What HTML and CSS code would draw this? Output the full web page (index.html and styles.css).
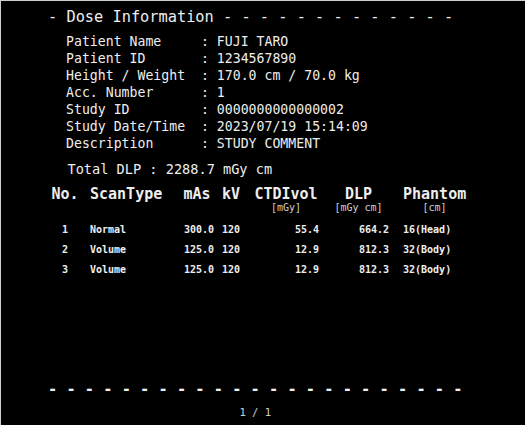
FILE: index.html
```html
<!DOCTYPE html>
<html>
<head>
<meta charset="utf-8">
<link rel="stylesheet" href="styles.css">
</head>
<body>
<div class="page">
  <div class="title">- Dose Information - - - - - - - - - - - - -</div>
  <div class="info">Patient Name     : FUJI TARO
Patient ID       : 1234567890
Height / Weight  : 170.0 cm / 70.0 kg
Acc. Number      : 1
Study ID         : 0000000000000002
Study Date/Time  : 2023/07/19 15:14:09
Description      : STUDY COMMENT</div>
  <div class="total">Total DLP : 2288.7 mGy cm</div>
  <div class="table">
    <div class="h c1">No.</div>
    <div class="h c2">ScanType</div>
    <div class="h c3">mAs</div>
    <div class="h c4">kV</div>
    <div class="h c5"><span class="hs"><span class="ht">CTDIvol</span><span class="unit">[mGy]</span></span></div>
    <div class="h c6"><span class="hs"><span class="ht">DLP</span><span class="unit">[mGy cm]</span></span></div>
    <div class="h c7"><span class="hs"><span class="ht">Phantom</span><span class="unit">[cm]</span></span></div>

    <div class="d c1 first">1</div><div class="d c2 first">Normal</div><div class="d c3 first">300.0</div><div class="d c4 first">120</div><div class="d c5 first">55.4</div><div class="d c6 first">664.2</div><div class="d c7 first">16(Head)</div>
    <div class="d c1">2</div><div class="d c2">Volume</div><div class="d c3">125.0</div><div class="d c4">120</div><div class="d c5">12.9</div><div class="d c6">812.3</div><div class="d c7">32(Body)</div>
    <div class="d c1">3</div><div class="d c2">Volume</div><div class="d c3">125.0</div><div class="d c4">120</div><div class="d c5">12.9</div><div class="d c6">812.3</div><div class="d c7">32(Body)</div>
  </div>
  <div class="footer">
    <div class="dashes">- - - - - - - - - - - - - - - - - - - - - - -</div>
    <div class="pageno">1 / 1</div>
  </div>
</div>
</body>
</html>
```

FILE: styles.css
```css
html, body {
  margin: 0;
  padding: 0;
  background: #000;
}
.page {
  box-sizing: border-box;
  width: 525px;
  height: 425px;
  background: #000;
  border-top: 1px solid #cfcfcf;
  border-left: 1px solid #cfcfcf;
  display: flex;
  flex-direction: column;
  color: #eeeeee;
  font-family: "DejaVu Sans Mono", "Liberation Mono", monospace;
  padding-top: 6px;
}
.title {
  font-size: 15.3px;
  line-height: 20px;
  white-space: pre;
  padding-left: 47px;
}
.info {
  white-space: pre;
  font-size: 13.2px;
  line-height: 17px;
  margin-top: 5.5px;
  padding-left: 65px;
}
.total {
  font-size: 13.6px;
  line-height: 18px;
  margin-top: 8.5px;
  padding-left: 66.5px;
  white-space: pre;
}
.table {
  display: grid;
  grid-template-columns: 50px 86px 42px 32px 72px 73px 85px;
  grid-auto-rows: auto;
  margin-top: 8px;
  padding-left: 39px;
}
.h {
  font-weight: bold;
  font-size: 15px;
  line-height: 16px;
  white-space: pre;
}
.hs {
  display: inline-flex;
  flex-direction: column;
  align-items: center;
}
.ht {
  display: block;
  height: 16px;
  overflow: visible;
}
.unit {
  display: block;
  font-weight: normal;
  font-size: 10px;
  line-height: 10px;
  margin-top: 1px;
  color: #d0d0d0;
}
.d {
  font-size: 10px;
  line-height: 20px;
  font-weight: bold;
  white-space: pre;
}
.d.first { margin-top: 7px; }
.c1 { text-align: center; }
.c2 { text-align: left; }
.h.c3 { text-align: center; }
.d.c3 { text-align: right; padding-right: 4px; }
.c4 { text-align: left; padding-left: 4px; }
.h.c5 { text-align: center; }
.d.c5 { text-align: right; padding-right: 3px; }
.h.c6 { text-align: center; }
.d.c6 { text-align: right; padding-right: 6px; }
.c7 { text-align: left; padding-left: 8px; }
.footer {
  margin-top: auto;
  padding-left: 47px;
  padding-bottom: 6px;
  align-self: flex-start;
  display: flex;
  flex-direction: column;
  align-items: center;
}
.dashes {
  font-size: 15.3px;
  line-height: 20px;
  font-weight: bold;
  white-space: pre;
}
.pageno {
  margin-top: 6px;
  font-size: 10.5px;
  line-height: 14px;
  color: #d0d0d0;
  white-space: pre;
}
```
